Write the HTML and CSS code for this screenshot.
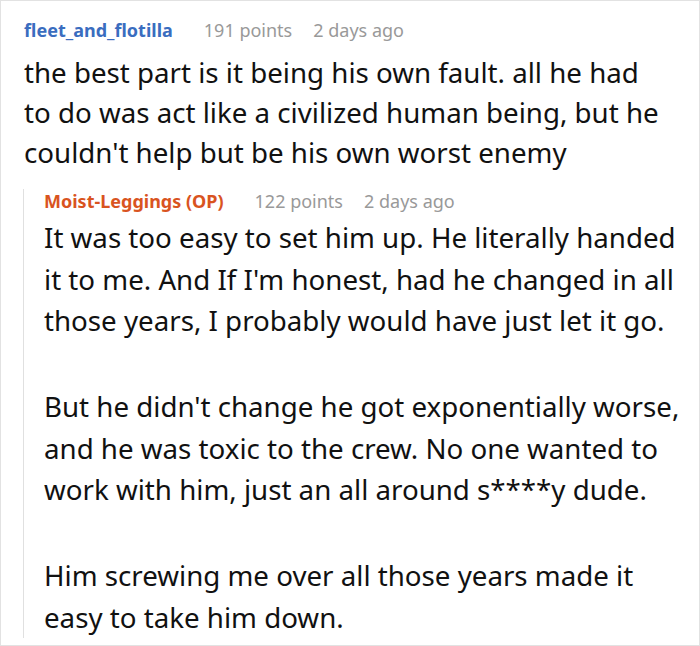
FILE: index.html
```html
<!DOCTYPE html>
<html>
<head>
<meta charset="utf-8">
<link rel="stylesheet" href="styles.css">
</head>
<body>
<div class="comment">
  <div class="meta">
    <span class="author">fleet_and_flotilla</span>
    <span class="points">191 points</span>
    <span class="time">2 days ago</span>
  </div>
  <div class="body first">the best part is it being his own fault. all he had to do was act like a civilized human being, but he couldn't help but be his own worst enemy</div>
  <div class="reply">
    <div class="meta">
      <span class="author op">Moist-Leggings (OP)</span>
      <span class="points">122 points</span>
      <span class="time">2 days ago</span>
    </div>
    <div class="body">
      <p>It was too easy to set him up. He literally handed it to me. And If I'm honest, had he changed in all those years, I probably would have just let it go.</p>
      <p>But he didn't change he got exponentially worse, and he was toxic to the crew. No one wanted to work with him, just an all around s****y dude.</p>
      <p>Him screwing me over all those years made it easy to take him down.</p>
    </div>
  </div>
</div>
</body>
</html>
```
FILE: styles.css
```css
html, body {
  margin: 0;
  padding: 0;
  background: #fff;
}
.comment {
  box-sizing: border-box;
  width: 700px;
  height: 646px;
  border: 1px solid #e2e2e2;
  padding: 17px 10px 0 23px;
  font-family: "Noto Sans", sans-serif;
  color: #111;
  overflow: hidden;
}
.meta {
  display: flex;
  align-items: baseline;
  font-size: 18px;
  line-height: 24px;
  white-space: nowrap;
}
.author {
  font-weight: bold;
  color: #3a6dbf;
  margin-right: 31px;
}
.author.op {
  color: #d9541f;
}
.points {
  color: #999;
  margin-right: 21px;
}
.time {
  color: #999;
}
.body {
  font-size: 27.7px;
  line-height: 40px;
}
.body.first {
  margin-top: 10px;
  max-width: 646px;
}
.reply {
  margin-top: 17px;
  margin-left: -1px;
  border-left: 1px solid #e0e0e0;
  padding-left: 20px;
  padding-bottom: 0;
}
.reply .body {
  margin-top: 4px;
  line-height: 41.5px;
}
.reply .body p {
  margin: 0 0 44.5px;
}
.reply .body p:last-child {
  margin-bottom: -6px;
}
```
